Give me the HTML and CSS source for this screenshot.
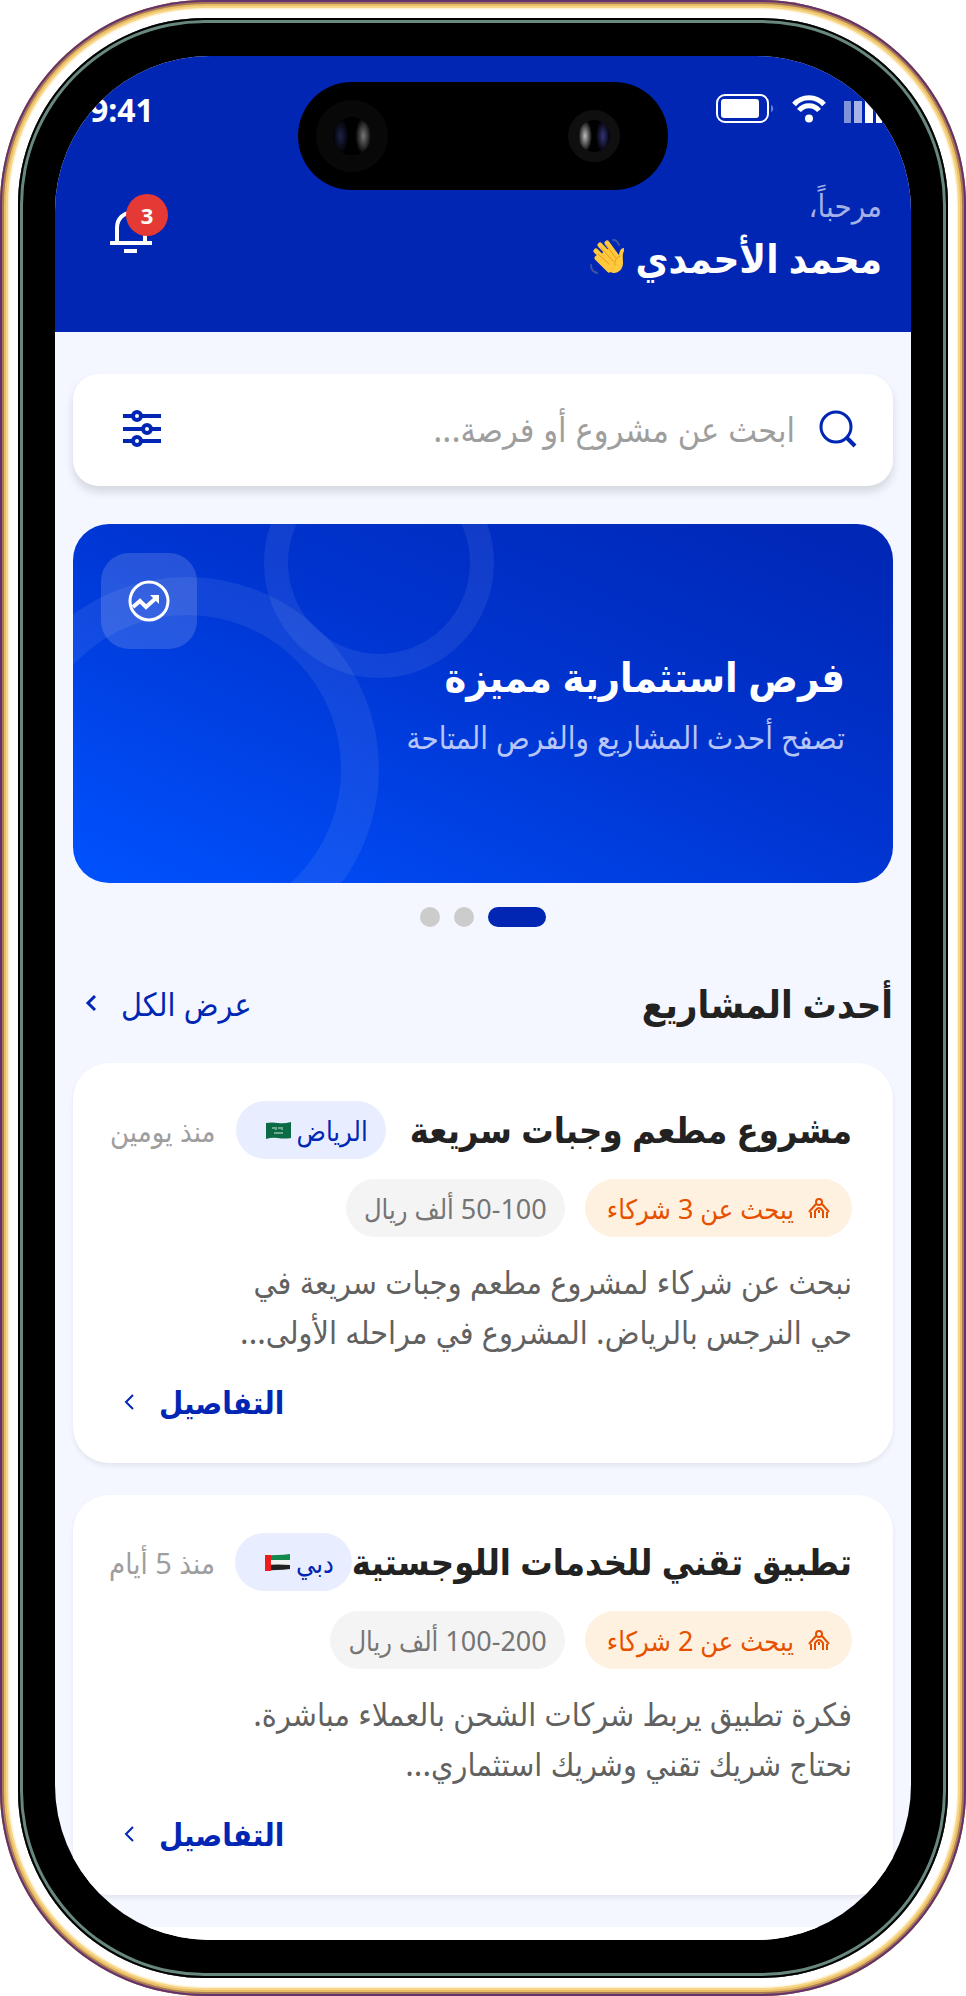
FILE: index.html
```
<!DOCTYPE html>
<html lang="ar" dir="rtl">
  <head>
    <meta charset="UTF-8" />
    <meta name="viewport" content="width=device-width, initial-scale=1.0" />
    <title>أحدث المشاريع</title>
    <link rel="stylesheet" href="styles.css">
  </head>
  <body>
    <div class="phone">
      <div class="bezel">
        <div class="island">
          <span class="lens lens-small"></span>
          <span class="lens lens-big"></span>
        </div>
        <div class="screen">
          <header class="header">
            <div class="status">
              <div class="status-icons">
                <svg width="38" height="28" viewBox="0 0 38 28" fill="#fff">
                  <rect x="0" y="6" width="7" height="22" opacity=".5" />
                  <rect x="10" y="6" width="8" height="22" opacity=".65" />
                  <rect x="21" y="6" width="8" height="22" />
                  <rect x="32" y="0" width="6" height="28" />
                </svg>
                <svg width="34" height="28" viewBox="0 0 34 28" fill="none" stroke="#fff" stroke-width="5">
                  <path d="M2 9.500C10 .5 24 .5 32 9.500" />
                  <path d="M7 15.500C12 9 22 9 27 15.500" />
                  <circle cx="17" cy="23.500" r="4" fill="#fff" stroke="none" />
                </svg>
                <svg width="58" height="30" viewBox="0 0 58 30" fill="none">
                  <rect x="1" y="1" width="51" height="27" rx="8" stroke="#fff" stroke-width="2" />
                  <rect x="5" y="5" width="38" height="19" rx="3" fill="#fff" />
                  <path d="M55 11c3 1 3 6 0 7z" fill="#fff" opacity=".4" />
                </svg>
              </div>
              <span class="time">9:41</span>
            </div>
            <div class="welcome">
              <div>
                <p class="hello">مرحباً،</p>
                <h1 class="name">
                  محمد الأحمدي
                  <svg class="wave" width="38" height="38" viewBox="0 0 38 38" fill="none" stroke-linecap="round">
                    <path d="M34 12c-2 4-1 7-1 12 0 8-8 13-14 8L8 20l6-8 8-4 7 10c0-4 1-9 5-9z" fill="#ffc83d" />
                    <path d="M7 19l12 12M6 12l15 15M10 6l14 15M17 4l11 15" stroke="#ffc83d" stroke-width="5" />
                    <path d="M8 15l11 10M11 9l12 13M16 6l10 13M30 17c-4 2-6 5-5 9" stroke="#e69a18" stroke-width="1" />
                    <path d="M23 1c3 0 5 2 6 5M1 26c0 4 2 7 6 8" stroke="#3d56a0" stroke-width="2" />
                  </svg>
                </h1>
              </div>
              <button class="bell" type="button" aria-label="الإشعارات">
                <svg width="42" height="48" viewBox="0 0 42 48" fill="none" stroke="#fff" stroke-width="4">
                  <path d="M7 33V19C7 -1 35 -1 35 19V33M0 34H42M14 42H27" />
                </svg>
                <span class="badge">3</span>
              </button>
            </div>
          </header>

          <main class="content">
            <form class="search">
              <svg width="38" height="38" viewBox="0 0 38 38" fill="none" stroke="#0026b3" stroke-width="3">
                <circle cx="17" cy="17" r="15" />
                <path d="M28 28l8 8" stroke-width="4" />
              </svg>
              <input class="search-input" type="text" aria-label="بحث" placeholder="ابحث عن مشروع أو فرصة..." />
              <button class="filter" type="button" aria-label="تصفية">
                <svg width="38" height="38" viewBox="0 0 38 38" fill="none" stroke="#0026b3" stroke-width="4">
                  <path d="M0 6h10M18 6h20M0 19h20M28 19h10M0 31h10M18 31h20" />
                  <circle cx="14" cy="6" r="4" />
                  <circle cx="24" cy="19" r="4" />
                  <circle cx="14" cy="31" r="4" />
                </svg>
              </button>
            </form>

            <section class="banner">
              <span class="ring ring-big"></span>
              <span class="ring ring-small"></span>
              <span class="banner-icon">
                <svg width="42" height="42" viewBox="0 0 42 42" fill="none" stroke="#fff" stroke-width="3">
                  <circle cx="21" cy="21" r="19" />
                  <path d="M5 27l7-6 6 6 9-8" stroke-width="4" />
                  <path d="M22 15h9v9z" fill="#fff" stroke="none" />
                </svg>
              </span>
              <h2 class="banner-title">فرص استثمارية مميزة</h2>
              <p class="banner-text">تصفح أحدث المشاريع والفرص المتاحة</p>
            </section>

            <div class="dots">
              <button class="dot active" type="button" aria-label="1"></button>
              <button class="dot" type="button" aria-label="2"></button>
              <button class="dot" type="button" aria-label="3"></button>
            </div>

            <div class="section-head">
              <h2 class="section-title">أحدث المشاريع</h2>
              <a href="#" class="show-all">
                عرض الكل
                <svg width="12" height="18" viewBox="0 0 12 18" fill="none" stroke="#0026b3" stroke-width="3">
                  <path d="M10 2L3 9l7 7" />
                </svg>
              </a>
            </div>

            <article class="card">
              <div class="card-head">
                <h3 class="card-title">مشروع مطعم وجبات سريعة</h3>
                <div class="card-meta">
                  <span class="chip city">
                    الرياض
                    <svg width="25" height="17" viewBox="0 0 25 17">
                      <path d="M0 1q6-1 12 0t13-1v16q-7 1-13 0t-12 1z" fill="#0b6b45" />
                      <path d="M6 6h3M10 5v3M12 6h3M16 5v3M8 11h9" stroke="#cfe5d8" stroke-width="1" />
                    </svg>
                  </span>
                  <span class="ago">منذ يومين</span>
                </div>
              </div>
              <div class="tags">
                <span class="chip partners">
                  <svg width="22" height="22" viewBox="0 0 22 22" fill="none" stroke="#e65100" stroke-width="2">
                    <circle cx="11" cy="5" r="3" />
                    <path d="M7 21v-7q4-6 8 0v7M3 21v-6M19 21v-6M1 15l7-8M21 15l-7-8M11 13v3" />
                  </svg>
                  يبحث عن 3 شركاء
                </span>
                <span class="chip budget">50-100 ألف ريال</span>
              </div>
              <p class="card-text">نبحث عن شركاء لمشروع مطعم وجبات سريعة في<br />حي النرجس بالرياض. المشروع في مراحله الأولى...</p>
              <a href="#" class="details">
                التفاصيل
                <svg width="12" height="18" viewBox="0 0 12 18" fill="none" stroke="#0026b3" stroke-width="2">
                  <path d="M10 2L3 9l7 7" />
                </svg>
              </a>
            </article>

            <article class="card">
              <div class="card-head">
                <h3 class="card-title">تطبيق تقني للخدمات اللوجستية</h3>
                <div class="card-meta">
                  <span class="chip city">
                    دبي
                    <svg width="25" height="17" viewBox="0 0 25 17">
                      <path d="M0 2q6-1 12-1t13-1v6H0z" fill="#138a4b" />
                      <path d="M0 6h25v6H0z" fill="#f2f2f2" />
                      <path d="M0 11q13-1 25 0v4q-7 1-13 1t-12 1z" fill="#222" />
                      <path d="M0 1l6 0v16H0z" fill="#f01c1c" />
                    </svg>
                  </span>
                  <span class="ago">منذ 5 أيام</span>
                </div>
              </div>
              <div class="tags">
                <span class="chip partners">
                  <svg width="22" height="22" viewBox="0 0 22 22" fill="none" stroke="#e65100" stroke-width="2">
                    <circle cx="11" cy="5" r="3" />
                    <path d="M7 21v-7q4-6 8 0v7M3 21v-6M19 21v-6M1 15l7-8M21 15l-7-8M11 13v3" />
                  </svg>
                  يبحث عن 2 شركاء
                </span>
                <span class="chip budget">100-200 ألف ريال</span>
              </div>
              <p class="card-text">فكرة تطبيق يربط شركات الشحن بالعملاء مباشرة.<br />نحتاج شريك تقني وشريك استثماري...</p>
              <a href="#" class="details">
                التفاصيل
                <svg width="12" height="18" viewBox="0 0 12 18" fill="none" stroke="#0026b3" stroke-width="2">
                  <path d="M10 2L3 9l7 7" />
                </svg>
              </a>
            </article>

            <article class="card"></article>
          </main>
        </div>
      </div>
    </div>
  </body>
</html>
```
FILE: styles.css
```
* {
  box-sizing: border-box;
}
body {
  margin: 0;
  background-color: #fff;
  font-family: "Noto Sans", "DejaVu Sans Condensed", "DejaVu Sans", sans-serif;
}
h1,
h2,
h3,
p {
  margin: 0;
}
button {
  border: 0;
  padding: 0;
  background: none;
  cursor: pointer;
}
a {
  color: #0026b3;
  text-decoration: none;
}
svg {
  display: block;
  flex-shrink: 0;
}

/* phone frame */
.phone {
  height: 100vh;
  padding: 18px;
  border-radius: 205px;
  background-color: #fff;
  box-shadow: inset 0 0 0 2px #64326f, inset 0 0 0 4px #a87a55,
    inset 0 0 0 6px #e8bd66, inset 0 0 0 8px #f8d687, inset 0 0 2px 9px #fdeec9;
}
.bezel {
  position: relative;
  height: 100%;
  padding: 38px 37px;
  border-radius: 187px;
  background-color: #000;
  box-shadow: inset 0 0 0 2px #000, inset 0 0 0 5px #67877f;
}
.screen {
  height: 100%;
  overflow: hidden;
  border-radius: 155px;
  background-color: #f4f7ff;
}
.island {
  position: absolute;
  top: 64px;
  left: 50%;
  width: 370px;
  height: 108px;
  padding: 0 48px 0 18px;
  transform: translateX(-50%);
  border-radius: 54px;
  background-color: #000;
  display: flex;
  justify-content: space-between;
  align-items: center;
}
.lens {
  width: 72px;
  height: 72px;
  border: 17px solid #080808;
  border-radius: 50%;
  background: radial-gradient(8px 18px at 20% 50%, #1d2145, transparent),
    radial-gradient(8px 18px at 80% 50%, #777, transparent), #000;
}
.lens-small {
  width: 52px;
  height: 52px;
  border: 10px solid #0f0f0f;
  background: radial-gradient(7px 16px at 22% 50%, #bbb, transparent),
    radial-gradient(7px 16px at 78% 50%, #34347a, transparent), #000;
}

/* header */
.header {
  height: 276px;
  padding: 33px 29px 0;
  background-color: #0026b3;
  color: #fff;
}
.status {
  display: flex;
  justify-content: space-between;
  align-items: center;
  height: 40px;
  padding-left: 6px;
}
.status-icons {
  display: flex;
  align-items: center;
  gap: 18px;
}
.time {
  font-size: 32px;
  font-weight: bold;
}
.welcome {
  display: flex;
  justify-content: space-between;
  align-items: flex-start;
  padding-top: 50px;
}
.hello {
  font-size: 31px;
  line-height: 52px;
  color: #a3b1e6;
}
.name {
  display: flex;
  align-items: center;
  gap: 8px;
  font-size: 40px;
  line-height: 54px;
}
.bell {
  position: relative;
  margin: 30px 26px 0;
}
.badge {
  position: absolute;
  top: -15px;
  right: -16px;
  width: 42px;
  height: 42px;
  border-radius: 50%;
  background-color: #e53935;
  color: #fff;
  font-family: "Noto Sans", sans-serif;
  font-size: 22px;
  font-weight: bold;
  line-height: 42px;
}

/* content */
.content {
  padding: 42px 18px 0;
}
.search {
  display: flex;
  align-items: center;
  gap: 24px;
  height: 112px;
  padding: 0 36px 2px 50px;
  border-radius: 26px;
  background-color: #fff;
  box-shadow: 0 6px 10px rgba(0, 0, 0, 0.13);
}
.search-input {
  flex: 1;
  min-width: 0;
  padding: 0;
  border: 0;
  outline: 0;
  background: none;
  font-family: inherit;
  font-size: 34px;
  color: #222;
}
.search-input::placeholder {
  color: #9e9e9e;
  opacity: 1;
}
.banner {
  position: relative;
  overflow: hidden;
  height: 359px;
  margin-top: 38px;
  padding: 120px 48px 0;
  border-radius: 36px;
  background: linear-gradient(to top right, #0052ff, #0034d0 55%, #0026b3);
  color: #fff;
}
.ring {
  position: absolute;
  border-radius: 50%;
  border: 38px solid rgba(255, 255, 255, 0.07);
}
.ring-big {
  top: 53px;
  left: -78px;
  width: 384px;
  height: 384px;
}
.ring-small {
  top: -76px;
  left: 191px;
  width: 230px;
  height: 230px;
  border-width: 24px;
}
.banner-icon {
  position: absolute;
  top: 29px;
  left: 28px;
  display: flex;
  justify-content: center;
  align-items: center;
  width: 96px;
  height: 96px;
  border-radius: 28px;
  background-color: rgba(255, 255, 255, 0.15);
}
.banner-title {
  font-size: 41px;
  line-height: 64px;
}
.banner-text {
  font-size: 31px;
  line-height: 58px;
  color: #b8c6f7;
}
.dots {
  display: flex;
  justify-content: center;
  gap: 14px;
  padding: 24px 0;
}
.dot {
  width: 20px;
  height: 20px;
  border-radius: 10px;
  background-color: #ccc;
}
.active {
  width: 58px;
  background-color: #0026b3;
}
.section-head {
  display: flex;
  justify-content: space-between;
  align-items: center;
  height: 64px;
  margin: 20px 0 28px;
  padding-left: 12px;
}
.section-title {
  font-size: 38px;
  color: #222;
}
.show-all,
.details {
  display: flex;
  align-items: center;
  gap: 24px;
  font-size: 32px;
}

/* project cards */
.card {
  min-height: 400px;
  margin-bottom: 32px;
  padding: 38px 41px 0 37px;
  border-radius: 36px;
  background-color: #fff;
  box-shadow: 0 3px 5px rgba(0, 0, 0, 0.07);
}
.card-head {
  display: flex;
  justify-content: space-between;
  align-items: center;
}
.card-title {
  font-size: 36px;
  line-height: 58px;
  color: #222;
  white-space: nowrap;
}
.card-meta {
  display: flex;
  align-items: center;
  gap: 20px;
}
.chip {
  display: flex;
  align-items: center;
  height: 58px;
  padding: 0 18px;
  border-radius: 29px;
  font-size: 27px;
  white-space: nowrap;
}
.city {
  gap: 6px;
  padding-left: 30px;
  background-color: #e8eeff;
  color: #0026b3;
}
.ago {
  font-size: 29px;
  color: #9e9e9e;
  white-space: nowrap;
}
.tags {
  display: flex;
  gap: 20px;
  margin-top: 20px;
}
.partners {
  gap: 14px;
  padding: 0 22px;
  background-color: #fff1e0;
  color: #e65100;
}
.budget {
  background-color: #f4f4f4;
  color: #757575;
}
.card-text {
  margin-top: 20px;
  font-size: 32px;
  line-height: 50px;
  color: #616161;
  white-space: nowrap;
}
.details {
  justify-content: flex-end;
  margin-top: 20px;
  padding-left: 13px;
  font-size: 31px;
  font-weight: bold;
  line-height: 50px;
}
```
